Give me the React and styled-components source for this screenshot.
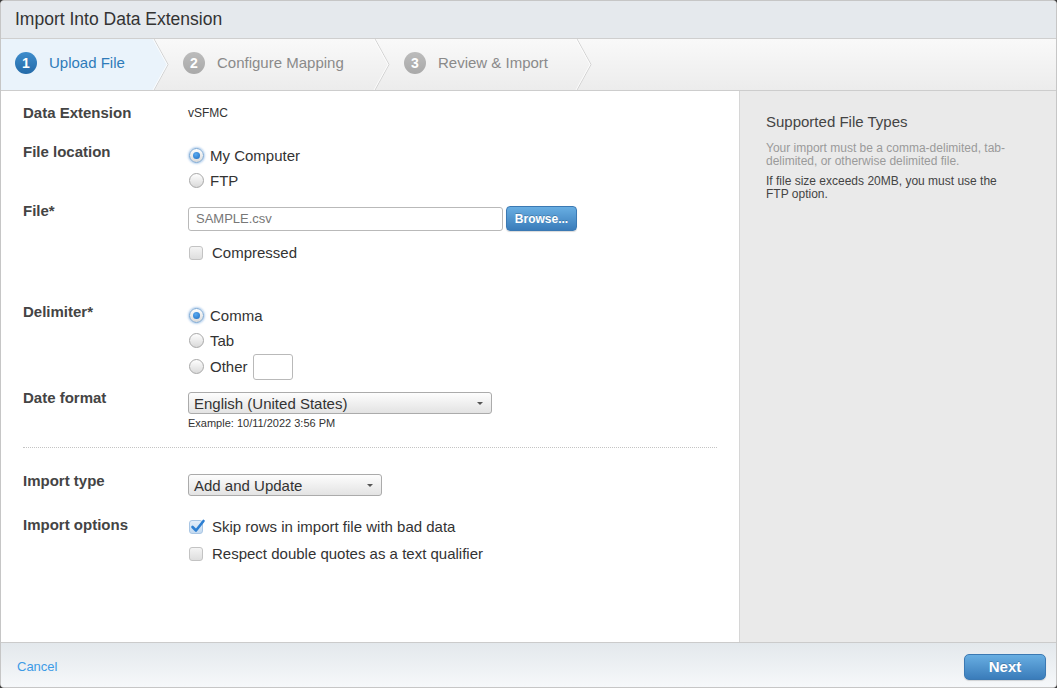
import styled, { createGlobalStyle } from "styled-components";

const GlobalStyle = createGlobalStyle`
  html, body {
    margin: 0;
    padding: 0;
    background: #3c3c3c;
  }
  body {
    font-family: "Liberation Sans", Arial, sans-serif;
    color: #333;
  }
`;

const Dialog = styled.div`
  width: 1057px;
  height: 688px;
  box-sizing: border-box;
  display: flex;
  flex-direction: column;
  background: #fff;
  border: 1px solid #c6c6c6;
  border-radius: 4px;
  overflow: hidden;
`;

const Header = styled.div`
  height: 38px;
  flex: none;
  display: flex;
  align-items: center;
  padding: 0 0 1px 14px;
  box-sizing: border-box;
  background: #e5e9ed;
  border-bottom: 1px solid #cfcfcf;
  font-size: 17.5px;
  color: #333;
`;

const Steps = styled.div`
  height: 51px;
  flex: none;
  display: flex;
  background: linear-gradient(#f9f9f9, #ececec);
  border-bottom: 1px solid #cdcdcd;
`;

const Step = styled.div`
  position: relative;
  width: ${(p) => p.$width}px;
  display: flex;
  align-items: center;
  padding: 0 0 4px 14px;
  box-sizing: border-box;
  font-size: 15px;
  color: ${(p) => (p.$active ? "#2f7bb9" : "#8a8a8a")};

  &::before {
    content: "";
    position: absolute;
    inset: 0;
    background: ${(p) => (p.$active ? "#eaf3fb" : "transparent")};
    clip-path: polygon(0 0, calc(100% - 15px) 0, calc(100% - 1px) 50%, calc(100% - 15px) 100%, 0 100%);
  }
`;

const StepNum = styled.span`
  position: relative;
  width: 22px;
  height: 22px;
  border-radius: 50%;
  display: flex;
  align-items: center;
  justify-content: center;
  margin-right: 12px;
  font-size: 14px;
  font-weight: bold;
  color: #fff;
  background: ${(p) =>
    p.$active ? "linear-gradient(#3f8dcc, #246aa8)" : "linear-gradient(#bcbcbc, #a9a9a9)"};
`;

const StepLabel = styled.span`
  position: relative;
`;

const Chevron = styled.svg`
  position: absolute;
  right: 0;
  top: 0;
`;

const Main = styled.div`
  flex: 1;
  display: flex;
  min-height: 0;
`;

const Form = styled.div`
  flex: 1;
  padding: 13px 22px 0 22px;
`;

const Row = styled.div`
  display: flex;
  align-items: flex-start;
  margin-top: ${(p) => p.$gap || 0}px;
`;

const Label = styled.div`
  width: 165px;
  flex: none;
  font-size: 15px;
  line-height: 18px;
  font-weight: bold;
  color: #444;
  padding-top: ${(p) => p.$pad || 0}px;
`;

const Field = styled.div`
  display: flex;
  flex-direction: column;
  padding-top: ${(p) => p.$pad || 0}px;
`;

const Value = styled.div`
  font-size: 12px;
  line-height: 18px;
  color: #333;
`;

const Option = styled.label`
  display: flex;
  align-items: center;
  height: ${(p) => p.$h || 25}px;
  font-size: 15px;
  color: #333;
  margin-top: ${(p) => p.$gap || 0}px;
`;

const Radio = styled.span`
  width: 15px;
  height: 15px;
  box-sizing: border-box;
  border-radius: 50%;
  margin: 0 6px 0 1px;
  display: flex;
  align-items: center;
  justify-content: center;
  border: 1px solid ${(p) => (p.$checked ? "#7aa7d3" : "#a8a8a8")};
  background: linear-gradient(#fefefe, #dadada);
  box-shadow: ${(p) => (p.$checked ? "0 0 2px 1px rgba(90,150,215,0.45)" : "none")};

  &::after {
    content: "";
    display: ${(p) => (p.$checked ? "block" : "none")};
    width: 7px;
    height: 7px;
    border-radius: 50%;
    background: radial-gradient(circle at 40% 35%, #5aaaf0, #1c6cc0);
  }
`;

const Box = styled.span`
  position: relative;
  width: 14px;
  height: 14px;
  box-sizing: border-box;
  border-radius: 3px;
  margin: 0 9px 0 1px;
  border: 1px solid ${(p) => (p.$checked ? "#a9c6e4" : "#c3c3c3")};
  background: ${(p) => (p.$checked ? "linear-gradient(#e3eefa, #c4daf0)" : "linear-gradient(#f4f4f4, #dedede)")};

  svg {
    position: absolute;
    left: -1px;
    top: -3px;
  }
`;

const TextInput = styled.div`
  width: ${(p) => p.$w}px;
  height: ${(p) => p.$h || 24}px;
  box-sizing: border-box;
  border: 1px solid #b9b9b9;
  border-radius: 3px;
  background: #fff;
  display: flex;
  align-items: center;
  padding-left: 7px;
  font-size: 13px;
  color: #777;
  margin-left: ${(p) => p.$ml || 0}px;
`;

const FileLine = styled.div`
  display: flex;
  align-items: center;
  gap: 3px;
`;

const BlueButton = styled.button`
  width: ${(p) => p.$w}px;
  height: ${(p) => p.$h}px;
  border: 1px solid #3b79b3;
  border-radius: ${(p) => p.$r}px;
  background: linear-gradient(#68aee2, #3a7cba);
  color: #fff;
  font-family: inherit;
  font-weight: bold;
  font-size: ${(p) => p.$fs}px;
  text-shadow: 0 -1px 0 rgba(0, 0, 0, 0.2);
  box-shadow: 0 1px 1px rgba(0, 0, 0, 0.15);
  padding: 0;
`;

const Select = styled.div`
  width: ${(p) => p.$w}px;
  height: 22px;
  box-sizing: border-box;
  border: 1px solid #ababab;
  border-radius: 3px;
  background: linear-gradient(#fdfdfd, #e3e3e3);
  display: flex;
  align-items: center;
  justify-content: space-between;
  padding: 0 8px 0 5px;
  font-size: 15px;
  color: #333;

  &::after {
    content: "";
    border-left: 3px solid transparent;
    border-right: 3px solid transparent;
    border-top: 3px solid #555;
  }
`;

const Hint = styled.div`
  margin-top: 3px;
  font-size: 11px;
  line-height: 13px;
  color: #333;
`;

const Divider = styled.div`
  margin-top: 17px;
  border-top: 1px dotted #c4c4c4;
`;

const Aside = styled.div`
  width: 317px;
  flex: none;
  background: #eaeaea;
  border-left: 1px solid #d6d6d6;
  padding: 22px 34px 0 26px;
  box-sizing: border-box;
`;

const AsideTitle = styled.div`
  font-size: 15px;
  line-height: 18px;
  color: #444;
`;

const AsideText = styled.p`
  margin: ${(p) => p.$gap}px 0 0;
  font-size: 12px;
  line-height: 13px;
  color: ${(p) => (p.$muted ? "#9a9a9a" : "#444")};
`;

const Footer = styled.div`
  height: 45px;
  flex: none;
  display: flex;
  align-items: center;
  justify-content: space-between;
  padding: 3px 10px 0 16px;
  box-sizing: border-box;
  border-top: 1px solid #cbcbcb;
  background: linear-gradient(#e3e8ec, #f6f8fa);
`;

const Link = styled.a`
  font-size: 13px;
  color: #3d9be6;
  text-decoration: none;
`;

const steps = [
  { n: 1, label: "Upload File", width: 168, active: true },
  { n: 2, label: "Configure Mapping", width: 221 },
  { n: 3, label: "Review & Import", width: 202 },
];

function Check() {
  return (
    <svg width="17" height="17" viewBox="0 0 17 17">
      <path d="M3.5 9 L7 12.5 L14.5 3" fill="none" stroke="#2d7fd2" strokeWidth="2.6" strokeLinecap="round" strokeLinejoin="round" />
    </svg>
  );
}

export default function App() {
  return (
    <>
      <GlobalStyle />
      <Dialog>
        <Header>Import Into Data Extension</Header>
        <Steps>
          {steps.map((s) => (
            <Step key={s.n} $width={s.width} $active={s.active}>
              <StepNum $active={s.active}>{s.n}</StepNum>
              <StepLabel>{s.label}</StepLabel>
              <Chevron width="17" height="51" viewBox="0 0 17 51">
                <polyline points="2,0 16,25.5 2,51" fill="none" stroke="#d2d2d2" strokeWidth="1" />
                <polyline points="1,0 15,25.5 1,51" fill="none" stroke="#ffffff" strokeWidth="1" opacity="0.8" />
              </Chevron>
            </Step>
          ))}
        </Steps>
        <Main>
          <Form>
            <Row>
              <Label>Data Extension</Label>
              <Value>vSFMC</Value>
            </Row>
            <Row $gap={21}>
              <Label>File location</Label>
              <Field>
                <Option>
                  <Radio $checked />
                  My Computer
                </Option>
                <Option>
                  <Radio />
                  FTP
                </Option>
              </Field>
            </Row>
            <Row $gap={9}>
              <Label>File*</Label>
              <Field $pad={4}>
                <FileLine>
                  <TextInput $w={315}>SAMPLE.csv</TextInput>
                  <BlueButton $w={71} $h={25} $r={4} $fs={12}>
                    Browse...
                  </BlueButton>
                </FileLine>
                <Option $gap={9}>
                  <Box />
                  Compressed
                </Option>
              </Field>
            </Row>
            <Row $gap={38}>
              <Label>Delimiter*</Label>
              <Field>
                <Option>
                  <Radio $checked />
                  Comma
                </Option>
                <Option>
                  <Radio />
                  Tab
                </Option>
                <Option $h={27}>
                  <Radio />
                  Other
                  <TextInput $w={40} $h={26} $ml={5} />
                </Option>
              </Field>
            </Row>
            <Row $gap={9}>
              <Label>Date format</Label>
              <Field $pad={3}>
                <Select $w={304}>English (United States)</Select>
                <Hint>Example: 10/11/2022 3:56 PM</Hint>
              </Field>
            </Row>
            <Divider />
            <Row $gap={24}>
              <Label>Import type</Label>
              <Field $pad={2}>
                <Select $w={194}>Add and Update</Select>
              </Field>
            </Row>
            <Row $gap={17}>
              <Label $pad={3}>Import options</Label>
              <Field>
                <Option $h={27}>
                  <Box $checked>
                    <Check />
                  </Box>
                  Skip rows in import file with bad data
                </Option>
                <Option $h={27}>
                  <Box />
                  Respect double quotes as a text qualifier
                </Option>
              </Field>
            </Row>
          </Form>
          <Aside>
            <AsideTitle>Supported File Types</AsideTitle>
            <AsideText $muted $gap={11}>
              Your import must be a comma-delimited, tab-delimited, or otherwise delimited file.
            </AsideText>
            <AsideText $gap={7}>If file size exceeds 20MB, you must use the FTP option.</AsideText>
          </Aside>
        </Main>
        <Footer>
          <Link href="#">Cancel</Link>
          <BlueButton $w={82} $h={26} $r={5} $fs={15}>
            Next
          </BlueButton>
        </Footer>
      </Dialog>
    </>
  );
}
